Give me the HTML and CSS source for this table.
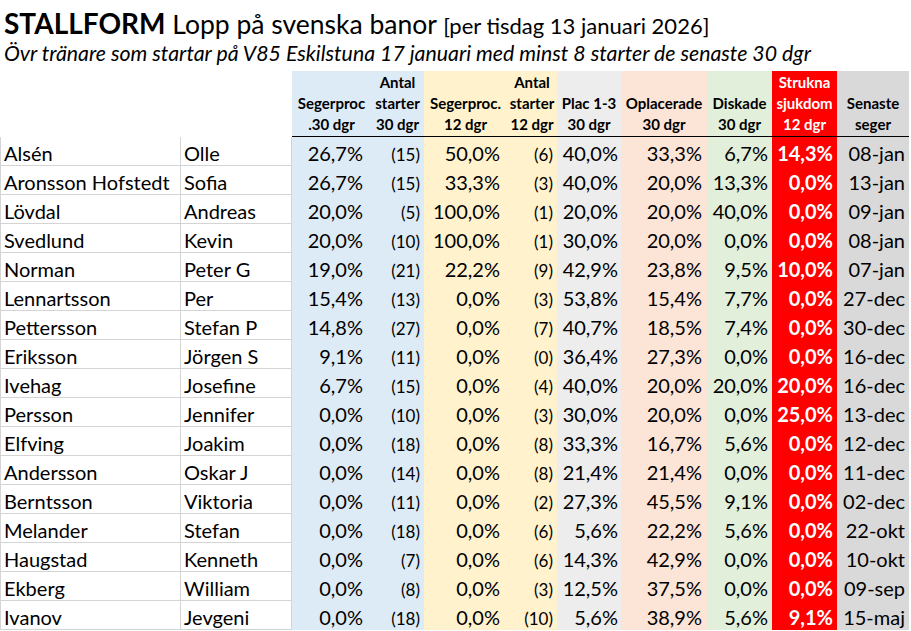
FILE: index.html
```html
<!DOCTYPE html>
<html lang="sv">
<head>
<meta charset="utf-8">
<title>Stallform</title>
<link rel="stylesheet" href="styles.css">
</head>
<body>
<div class="sheet">
  <h1 class="title"><b>STALLFORM</b> Lopp på svenska banor <span class="date">[per tisdag 13 januari 2026]</span></h1>
  <p class="subtitle">Övr tränare som startar på V85 Eskilstuna 17 januari med minst 8 starter de senaste 30 dgr</p>
  <div class="grid">
    <div class="h blank"></div>
    <div class="h blank"></div>
    <div class="h blue c3">Segerproc<br>.30 dgr</div>
    <div class="h blue c4">Antal<br>starter<br>30 dgr</div>
    <div class="h yellow c5">Segerproc.<br>12 dgr</div>
    <div class="h yellow c6">Antal<br>starter<br>12 dgr</div>
    <div class="h gray c7">Plac 1-3<br>30 dgr</div>
    <div class="h salmon c8">Oplacerade<br>30 dgr</div>
    <div class="h green c9">Diskade<br>30 dgr</div>
    <div class="h red c10">Strukna<br>sjukdom<br>12 dgr</div>
    <div class="h dgray c11">Senaste<br>seger</div>

    <div class="d ln">Alsén</div><div class="d fn">Olle</div><div class="d blue c3">26,7%</div><div class="d blue c4"><span class="cnt">(15)</span></div><div class="d yellow c5">50,0%</div><div class="d yellow c6"><span class="cnt">(6)</span></div><div class="d gray c7">40,0%</div><div class="d salmon c8">33,3%</div><div class="d green c9">6,7%</div><div class="d red c10">14,3%</div><div class="d dgray c11">08-jan</div>

    <div class="d ln">Aronsson Hofstedt</div><div class="d fn">Sofia</div><div class="d blue c3">26,7%</div><div class="d blue c4"><span class="cnt">(15)</span></div><div class="d yellow c5">33,3%</div><div class="d yellow c6"><span class="cnt">(3)</span></div><div class="d gray c7">40,0%</div><div class="d salmon c8">20,0%</div><div class="d green c9">13,3%</div><div class="d red c10">0,0%</div><div class="d dgray c11">13-jan</div>

    <div class="d ln">Lövdal</div><div class="d fn">Andreas</div><div class="d blue c3">20,0%</div><div class="d blue c4"><span class="cnt">(5)</span></div><div class="d yellow c5">100,0%</div><div class="d yellow c6"><span class="cnt">(1)</span></div><div class="d gray c7">20,0%</div><div class="d salmon c8">20,0%</div><div class="d green c9">40,0%</div><div class="d red c10">0,0%</div><div class="d dgray c11">09-jan</div>

    <div class="d ln">Svedlund</div><div class="d fn">Kevin</div><div class="d blue c3">20,0%</div><div class="d blue c4"><span class="cnt">(10)</span></div><div class="d yellow c5">100,0%</div><div class="d yellow c6"><span class="cnt">(1)</span></div><div class="d gray c7">30,0%</div><div class="d salmon c8">20,0%</div><div class="d green c9">0,0%</div><div class="d red c10">0,0%</div><div class="d dgray c11">08-jan</div>

    <div class="d ln">Norman</div><div class="d fn">Peter G</div><div class="d blue c3">19,0%</div><div class="d blue c4"><span class="cnt">(21)</span></div><div class="d yellow c5">22,2%</div><div class="d yellow c6"><span class="cnt">(9)</span></div><div class="d gray c7">42,9%</div><div class="d salmon c8">23,8%</div><div class="d green c9">9,5%</div><div class="d red c10">10,0%</div><div class="d dgray c11">07-jan</div>

    <div class="d ln">Lennartsson</div><div class="d fn">Per</div><div class="d blue c3">15,4%</div><div class="d blue c4"><span class="cnt">(13)</span></div><div class="d yellow c5">0,0%</div><div class="d yellow c6"><span class="cnt">(3)</span></div><div class="d gray c7">53,8%</div><div class="d salmon c8">15,4%</div><div class="d green c9">7,7%</div><div class="d red c10">0,0%</div><div class="d dgray c11">27-dec</div>

    <div class="d ln">Pettersson</div><div class="d fn">Stefan P</div><div class="d blue c3">14,8%</div><div class="d blue c4"><span class="cnt">(27)</span></div><div class="d yellow c5">0,0%</div><div class="d yellow c6"><span class="cnt">(7)</span></div><div class="d gray c7">40,7%</div><div class="d salmon c8">18,5%</div><div class="d green c9">7,4%</div><div class="d red c10">0,0%</div><div class="d dgray c11">30-dec</div>

    <div class="d ln">Eriksson</div><div class="d fn">Jörgen S</div><div class="d blue c3">9,1%</div><div class="d blue c4"><span class="cnt">(11)</span></div><div class="d yellow c5">0,0%</div><div class="d yellow c6"><span class="cnt">(0)</span></div><div class="d gray c7">36,4%</div><div class="d salmon c8">27,3%</div><div class="d green c9">0,0%</div><div class="d red c10">0,0%</div><div class="d dgray c11">16-dec</div>

    <div class="d ln">Ivehag</div><div class="d fn">Josefine</div><div class="d blue c3">6,7%</div><div class="d blue c4"><span class="cnt">(15)</span></div><div class="d yellow c5">0,0%</div><div class="d yellow c6"><span class="cnt">(4)</span></div><div class="d gray c7">40,0%</div><div class="d salmon c8">20,0%</div><div class="d green c9">20,0%</div><div class="d red c10">20,0%</div><div class="d dgray c11">16-dec</div>

    <div class="d ln">Persson</div><div class="d fn">Jennifer</div><div class="d blue c3">0,0%</div><div class="d blue c4"><span class="cnt">(10)</span></div><div class="d yellow c5">0,0%</div><div class="d yellow c6"><span class="cnt">(3)</span></div><div class="d gray c7">30,0%</div><div class="d salmon c8">20,0%</div><div class="d green c9">0,0%</div><div class="d red c10">25,0%</div><div class="d dgray c11">13-dec</div>

    <div class="d ln">Elfving</div><div class="d fn">Joakim</div><div class="d blue c3">0,0%</div><div class="d blue c4"><span class="cnt">(18)</span></div><div class="d yellow c5">0,0%</div><div class="d yellow c6"><span class="cnt">(8)</span></div><div class="d gray c7">33,3%</div><div class="d salmon c8">16,7%</div><div class="d green c9">5,6%</div><div class="d red c10">0,0%</div><div class="d dgray c11">12-dec</div>

    <div class="d ln">Andersson</div><div class="d fn">Oskar J</div><div class="d blue c3">0,0%</div><div class="d blue c4"><span class="cnt">(14)</span></div><div class="d yellow c5">0,0%</div><div class="d yellow c6"><span class="cnt">(8)</span></div><div class="d gray c7">21,4%</div><div class="d salmon c8">21,4%</div><div class="d green c9">0,0%</div><div class="d red c10">0,0%</div><div class="d dgray c11">11-dec</div>

    <div class="d ln">Berntsson</div><div class="d fn">Viktoria</div><div class="d blue c3">0,0%</div><div class="d blue c4"><span class="cnt">(11)</span></div><div class="d yellow c5">0,0%</div><div class="d yellow c6"><span class="cnt">(2)</span></div><div class="d gray c7">27,3%</div><div class="d salmon c8">45,5%</div><div class="d green c9">9,1%</div><div class="d red c10">0,0%</div><div class="d dgray c11">02-dec</div>

    <div class="d ln">Melander</div><div class="d fn">Stefan</div><div class="d blue c3">0,0%</div><div class="d blue c4"><span class="cnt">(18)</span></div><div class="d yellow c5">0,0%</div><div class="d yellow c6"><span class="cnt">(6)</span></div><div class="d gray c7">5,6%</div><div class="d salmon c8">22,2%</div><div class="d green c9">5,6%</div><div class="d red c10">0,0%</div><div class="d dgray c11">22-okt</div>

    <div class="d ln">Haugstad</div><div class="d fn">Kenneth</div><div class="d blue c3">0,0%</div><div class="d blue c4"><span class="cnt">(7)</span></div><div class="d yellow c5">0,0%</div><div class="d yellow c6"><span class="cnt">(6)</span></div><div class="d gray c7">14,3%</div><div class="d salmon c8">42,9%</div><div class="d green c9">0,0%</div><div class="d red c10">0,0%</div><div class="d dgray c11">10-okt</div>

    <div class="d ln">Ekberg</div><div class="d fn">William</div><div class="d blue c3">0,0%</div><div class="d blue c4"><span class="cnt">(8)</span></div><div class="d yellow c5">0,0%</div><div class="d yellow c6"><span class="cnt">(3)</span></div><div class="d gray c7">12,5%</div><div class="d salmon c8">37,5%</div><div class="d green c9">0,0%</div><div class="d red c10">0,0%</div><div class="d dgray c11">09-sep</div>

    <div class="d ln">Ivanov</div><div class="d fn">Jevgeni</div><div class="d blue c3">0,0%</div><div class="d blue c4"><span class="cnt">(18)</span></div><div class="d yellow c5">0,0%</div><div class="d yellow c6"><span class="cnt">(10)</span></div><div class="d gray c7">5,6%</div><div class="d salmon c8">38,9%</div><div class="d green c9">5,6%</div><div class="d red c10">9,1%</div><div class="d dgray c11">15-maj</div>
  </div>
</div>
</body>
</html>
```

FILE: styles.css
```css
html, body {
  margin: 0;
  padding: 0;
  background: #ffffff;
}

body {
  font-family: Lato, "Open Sans", sans-serif;
  color: #000000;
}

.sheet {
  width: 911px;
}

.title {
  margin: 0;
  box-sizing: border-box;
  height: 40px;
  padding: 6px 0 0 4px;
  font-size: 26.5px;
  line-height: 34px;
  font-weight: 400;
  white-space: nowrap;
}

.title b {
  font-size: 28px;
  font-weight: 700;
}

.title .date {
  font-size: 22px;
}

.subtitle {
  margin: 0;
  box-sizing: border-box;
  height: 31px;
  padding-left: 4px;
  font-size: 21.3px;
  line-height: 26px;
  font-style: italic;
  white-space: nowrap;
}

.grid {
  display: grid;
  grid-template-columns: 181px 111px 79px 53px 83px 50px 64px 86px 65px 65px 72px;
  grid-template-rows: 66px repeat(17, 29px);
  width: 909px;
}

.h {
  box-sizing: border-box;
  display: flex;
  flex-direction: column;
  justify-content: flex-end;
  padding-bottom: 1px;
  border-bottom: 1px solid #000000;
  font-size: 15px;
  line-height: 21px;
  font-weight: 700;
  text-align: center;
  white-space: nowrap;
}

.h.blank {
  border-bottom: none;
}

.d {
  box-sizing: border-box;
  padding-top: 5px;
  font-size: 20px;
  line-height: 23px;
  text-align: right;
  white-space: nowrap;
  overflow: hidden;
}

.cnt {
  font-size: 17px;
}

.ln,
.fn {
  text-align: left;
  padding-left: 3px;
  border-bottom: 1px solid #d4d4d4;
  border-right: 1px solid #d4d4d4;
}

.ln {
  border-left: 1px solid #d4d4d4;
}

.blue { background: #ddebf7; }
.yellow { background: #fff2cc; }
.gray { background: #ededed; }
.salmon { background: #fce4d6; }
.green { background: #e2efda; }
.red { background: #ff0000; color: #ffffff; font-weight: 700; }
.dgray { background: #d9d9d9; }

.d.c3 { padding-right: 8px; }
.d.c4 { padding-right: 4px; }
.d.c5 { padding-right: 7px; }
.d.c6 { padding-right: 4px; }
.d.c7 { padding-right: 3px; }
.d.c8 { padding-right: 5px; }
.d.c9 { padding-right: 4px; }
.d.c10 { padding-right: 4px; }
.d.c11 { padding-right: 4px; }
```
